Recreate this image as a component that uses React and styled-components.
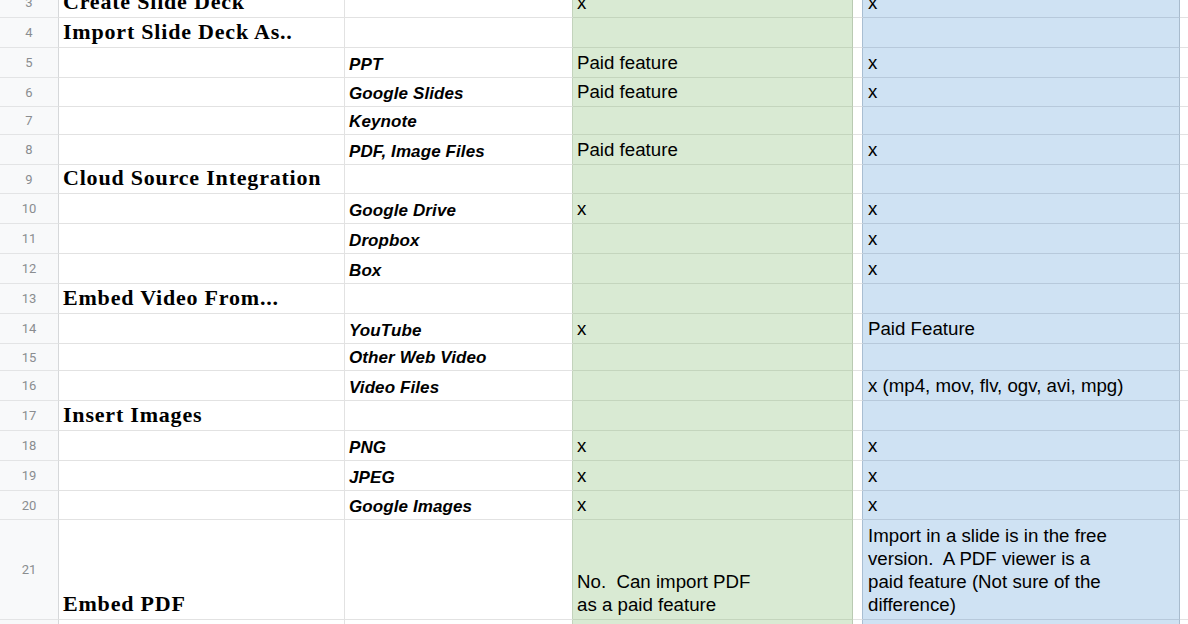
import React from 'react';
import styled, { createGlobalStyle } from 'styled-components';

const GlobalStyle = createGlobalStyle`
  html, body {
    margin: 0;
    padding: 0;
    background: #ffffff;
    overflow: hidden;
  }
  body {
    font-family: 'Liberation Sans', Arial, sans-serif;
  }
`;

const Sheet = styled.div`
  width: 1188px;
  height: 624px;
  overflow: hidden;
`;

// row 3 is only partly scrolled into view
const Rows = styled.div`
  margin-top: -12px;
`;

const Row = styled.div`
  display: grid;
  grid-template-columns: 59px 286px 228px 280px 10px 317px 1fr;
  height: ${({ $h }) => $h}px;
`;

const RowHeader = styled.div`
  box-sizing: border-box;
  background: #f8f9fa;
  border-right: 1px solid #d6d8da;
  border-bottom: 1px solid #e3e4e5;
  display: flex;
  align-items: center;
  justify-content: center;
  font-family: Roboto, 'Liberation Sans', sans-serif;
  font-size: 13px;
  color: #8a8d90;
`;

const tones = {
  plain: { bg: '#ffffff', bottom: '#e2e2e2', right: '#e2e2e2' },
  edge: { bg: '#ffffff', bottom: '#e2e2e2', right: '#c3d3bc' },
  green: { bg: '#d9ead3', bottom: '#c4d5bd', right: '#b9cab2' },
  gap: { bg: '#ffffff', bottom: '#e2e2e2', right: '#a9bed2' },
  blue: { bg: '#cfe2f3', bottom: '#b7c9db', right: '#a8bbcd' },
};

const Cell = styled.div`
  box-sizing: border-box;
  background: ${({ $tone }) => tones[$tone].bg};
  border-bottom: 1px solid ${({ $tone }) => tones[$tone].bottom};
  border-right: 1px solid ${({ $tone }) => tones[$tone].right};
  display: flex;
  align-items: flex-end;
  padding: 0 4px 3px ${({ $pl }) => $pl || 4}px;
  white-space: pre;
  min-width: 0;
`;

const Title = styled.span`
  font-family: 'Liberation Serif', 'Times New Roman', serif;
  font-weight: 700;
  font-size: 22px;
  letter-spacing: 0.8px;
  line-height: 24px;
  color: #000;
`;

const Label = styled.span`
  font-family: 'Liberation Sans', Arial, sans-serif;
  font-weight: 700;
  font-style: italic;
  font-size: 17px;
  letter-spacing: 0.1px;
  line-height: 19px;
  color: #000;
`;

const Value = styled.span`
  font-family: 'Liberation Sans', Arial, sans-serif;
  font-size: 18.7px;
  line-height: 23px;
  color: #000;
`;

const rows = [
  { n: 3, h: 30, a: 'Create Slide Deck', c: 'x', e: 'x' },
  { n: 4, h: 30, a: 'Import Slide Deck As..' },
  { n: 5, h: 30, b: 'PPT', c: 'Paid feature', e: 'x' },
  { n: 6, h: 29, b: 'Google Slides', c: 'Paid feature', e: 'x' },
  { n: 7, h: 28, b: 'Keynote' },
  { n: 8, h: 30, b: 'PDF, Image Files', c: 'Paid feature', e: 'x' },
  { n: 9, h: 29, a: 'Cloud Source Integration' },
  { n: 10, h: 30, b: 'Google Drive', c: 'x', e: 'x' },
  { n: 11, h: 30, b: 'Dropbox', e: 'x' },
  { n: 12, h: 30, b: 'Box', e: 'x' },
  { n: 13, h: 30, a: 'Embed Video From...' },
  { n: 14, h: 30, b: 'YouTube', c: 'x', e: 'Paid Feature' },
  { n: 15, h: 27, b: 'Other Web Video' },
  { n: 16, h: 30, b: 'Video Files', e: 'x (mp4, mov, flv, ogv, avi, mpg)' },
  { n: 17, h: 30, a: 'Insert Images' },
  { n: 18, h: 30, b: 'PNG', c: 'x', e: 'x' },
  { n: 19, h: 30, b: 'JPEG', c: 'x', e: 'x' },
  { n: 20, h: 29, b: 'Google Images', c: 'x', e: 'x' },
  {
    n: 21,
    h: 100,
    a: 'Embed PDF',
    c: 'No.  Can import PDF\nas a paid feature',
    e: 'Import in a slide is in the free\nversion.  A PDF viewer is a\npaid feature (Not sure of the\ndifference)',
  },
  { n: 22, h: 30 },
];

const App = () => {
  return (
    <Sheet>
      <GlobalStyle />
      <Rows>
        {rows.map((r) => (
          <Row key={r.n} $h={r.h}>
            <RowHeader>{r.n}</RowHeader>
            <Cell $tone="plain">{r.a && <Title>{r.a}</Title>}</Cell>
            <Cell $tone="edge">{r.b && <Label>{r.b}</Label>}</Cell>
            <Cell $tone="green">{r.c && <Value>{r.c}</Value>}</Cell>
            <Cell $tone="gap" />
            <Cell $tone="blue" $pl={5}>
              {r.e && <Value>{r.e}</Value>}
            </Cell>
            <Cell $tone="plain" />
          </Row>
        ))}
      </Rows>
    </Sheet>
  );
};

export default App;
